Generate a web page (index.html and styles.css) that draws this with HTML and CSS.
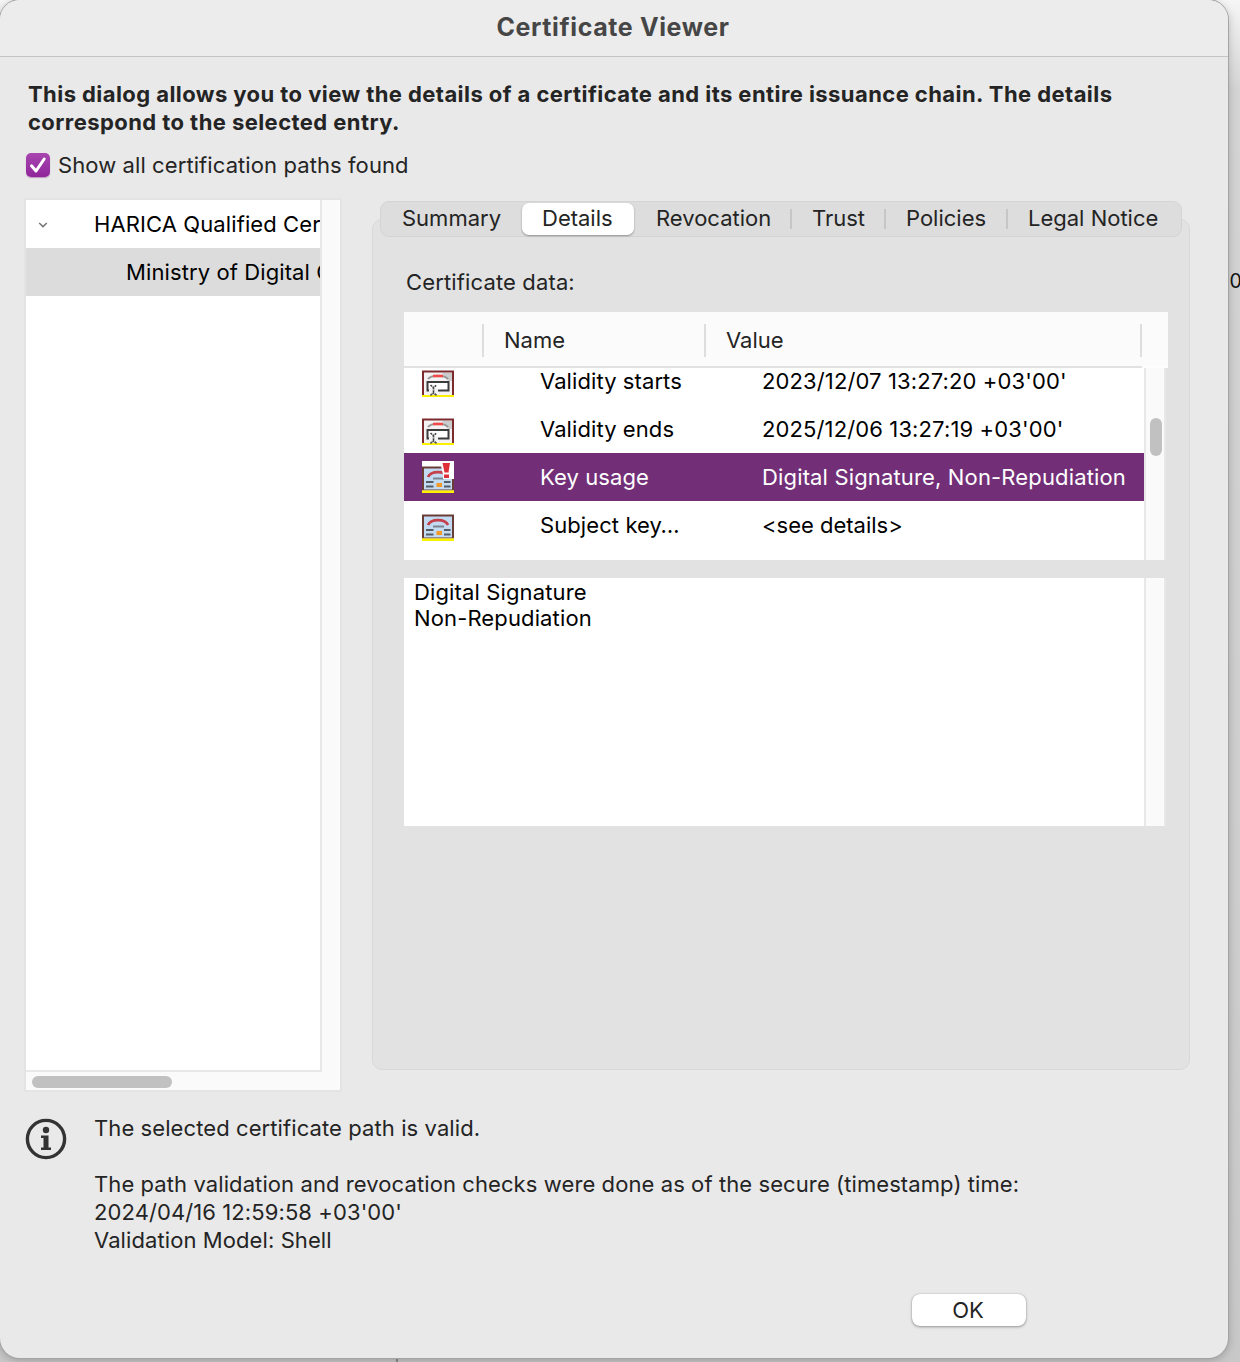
FILE: index.html
```html
<!DOCTYPE html>
<html lang="en">
<head>
<meta charset="utf-8">
<title>Certificate Viewer</title>
<link rel="stylesheet" href="styles.css">
</head>
<body>
<svg class="defs" width="0" height="0">
  <symbol id="cert-field" viewBox="0 0 32 32">
    <rect x="0" y="5.500" width="32" height="24.500" fill="#7c2c2e"/>
    <rect x="2" y="7.500" width="28" height="22.500" fill="#f4f2f3"/>
    <path d="M20 8 H30 V16 H26Z" fill="#ccc"/>
    <path d="M6 14 C9 9.500 23 9.500 26 14" fill="none" stroke="#999" stroke-width="2"/>
    <path d="M11 11 H21" stroke="#f04a4a" stroke-width="2.600"/>
    <rect x="5.500" y="17" width="21" height="8.500" fill="#fff" stroke="#3c3c3c" stroke-width="2"/>
    <path d="M7 23 H16 V30 H7Z" fill="#f4f2f3"/>
    <path d="M8.500 20 L11.500 22.500 L14.500 20 M11.500 22.500 V28 M8.500 30.500 L11.500 28 L14.500 30.500" fill="none" stroke="#444" stroke-width="1.600" stroke-dasharray="2 .7"/>
    <rect x="0" y="30" width="32" height="2" fill="#fbf000"/>
    <path d="M8.500 30.500 L10 29 M14.500 30.500 L13 29" stroke="#555" stroke-width="1.400"/>
  </symbol>
  <symbol id="cert" viewBox="0 0 32 32">
    <rect x="0" y="5.500" width="32" height="24" fill="#6a3c36"/>
    <rect x="2" y="7.500" width="28" height="21" fill="#c3dbf2"/>
    <path d="M6 16 C9 9.500 23 9.500 26 16" fill="none" stroke="#c4404a" stroke-width="2.800"/>
    <path d="M11 17.500 H22" stroke="#7b8490" stroke-width="2"/>
    <path d="M4 21 H11.500 M4 25.500 H11.500 M22 21 H28.500 M22 25.500 H28.500" stroke="#565c66" stroke-width="2"/>
    <rect x="14.500" y="22" width="5.500" height="4" fill="#f59a28"/>
    <rect x="0" y="29.500" width="32" height="2.500" fill="#fbf000"/>
  </symbol>
</svg>
<span class="behind-text">00</span>
<span class="behind-rule"></span>
<main class="window">
  <header class="titlebar">Certificate Viewer</header>
  <p class="intro">This dialog allows you to view the details of a certificate and its entire issuance chain. The details<br>correspond to the selected entry.</p>
  <label class="show-all">
    <span class="checkbox"><svg width="24" height="24" viewBox="0 0 24 24"><path d="M5.500 12.800 L10 18 L18.200 6" fill="none" stroke="#fff" stroke-width="3" stroke-linecap="round" stroke-linejoin="round"/></svg></span>
    <span>Show all certification paths found</span>
  </label>
  <div class="columns">
    <section class="tree">
      <div class="tree-list">
        <div class="tree-row"><svg class="chevron" width="10" height="6" viewBox="0 0 10 6"><path d="M1.200 1 L5 4.600 L8.800 1" fill="none" stroke="#777" stroke-width="1.500"/></svg><span>HARICA Qualified Cer</span></div>
        <div class="tree-row child selected"><span>Ministry of Digital G</span></div>
      </div>
      <div class="tree-vtrack"></div>
      <div class="tree-htrack"><span class="tree-thumb"></span></div>
    </section>
    <section class="pane">
      <nav class="tabs">
        <span class="tab summary">Summary</span>
        <span class="tab details active">Details</span>
        <span class="tab revocation divided">Revocation</span>
        <span class="tab trust divided">Trust</span>
        <span class="tab policies divided">Policies</span>
        <span class="tab legal">Legal Notice</span>
      </nav>
      <div class="pane-body">
        <div class="data-label">Certificate data:</div>
        <div class="table">
          <div class="thead"><span class="th th-icon"></span><span class="th th-name">Name</span><span class="th th-value">Value</span></div>
          <div class="tbody">
            <div class="rows">
              <div class="row first"><svg class="icon"><use href="#cert-field"/></svg><span class="name">Validity starts</span><span class="value">2023/12/07 13:27:20 +03'00'</span></div>
              <div class="row"><svg class="icon"><use href="#cert-field"/></svg><span class="name">Validity ends</span><span class="value">2025/12/06 13:27:19 +03'00'</span></div>
              <div class="row selected"><svg class="icon critical" viewBox="0 0 32 32"><use href="#cert"/><path d="M18 0 H32 V18 H21 V14Z" fill="#fff"/><path d="M20.500 2 H28 L26.500 11.500 H22.500Z M22 13.500 H27 V17 H22Z" fill="#dd3038"/></svg><span class="name">Key usage</span><span class="value usages">Digital Signature, Non-Repudiation</span></div>
              <div class="row"><svg class="icon"><use href="#cert"/></svg><span class="name">Subject key…</span><span class="value see">&lt;see details&gt;</span></div>
            </div>
            <div class="vtrack"><span class="vthumb"></span></div>
          </div>
        </div>
        <div class="detail">
          <div class="detail-text">Digital Signature<br>Non-Repudiation</div>
          <div class="vtrack"></div>
        </div>
      </div>
    </section>
  </div>
  <section class="status">
    <svg class="info" width="42" height="42" viewBox="0 0 42 42"><circle cx="21" cy="21" r="18.600" fill="none" stroke="#333" stroke-width="3.400"/><circle cx="21" cy="12" r="3.200" fill="#333"/><path d="M16 17.500 H23.500 V29.500 H26 V32 H16 V29.500 H18.500 V20 H16Z" fill="#333"/></svg>
    <p>The selected certificate path is valid.<br><br>The path validation and revocation checks were done as of the secure (timestamp) time:<br>2024/04/16 12:59:58 +03'00'<br>Validation Model: Shell</p>
  </section>
  <footer class="actions"><button class="ok">OK</button></footer>
</main>
</body>
</html>
```
FILE: styles.css
```css
* { box-sizing: border-box; }
body {
  margin: 0;
  width: 1240px;
  height: 1362px;
  overflow: hidden;
  position: relative;
  background: linear-gradient(#f6f6f6, #d4d4d4 90px, #cecece 900px, #c8c8c8);
  font: 22px/28px Inter, "Liberation Sans", sans-serif;
  letter-spacing: .09px;
  color: #242424;
}
p { margin: 0; }
span { white-space: nowrap; }
.defs { position: absolute; }
.behind-text { position: absolute; left: 1217px; top: 267px; font-size: 19.5px; color: #111; }
.behind-rule { position: absolute; left: 396px; top: 1356px; width: 2px; height: 6px; background: #8a8a8a; }
.window {
  position: relative;
  width: 1228px;
  height: 1358px;
  border-radius: 20px;
  background: #e9e9e9;
  box-shadow: 0 0 0 1px #a4a4a4, 0 2px 10px rgba(0, 0, 0, .25);
  overflow: hidden;
}
.titlebar {
  height: 57px;
  padding: 13px 2px 0 0;
  background: #ececec;
  border-bottom: 1px solid #c4c4c4;
  text-align: center;
  font-size: 25px;
  font-weight: 700;
  letter-spacing: .62px;
  color: #464646;
}
.intro { padding: 23px 28px 0; font-weight: 700; letter-spacing: .43px; white-space: nowrap; }
.show-all { display: flex; align-items: center; gap: 8px; height: 28px; margin: 15px 0 0 26px; }
.checkbox {
  width: 24px;
  height: 24px;
  border-radius: 5px;
  background: linear-gradient(#a846b0, #8f269b);
  box-shadow: 0 1px 1px rgba(120, 30, 130, .4);
}
.checkbox svg { display: block; }
.columns { display: flex; gap: 30px; margin: 19px 0 0 24px; }
.tree {
  width: 318px;
  height: 894px;
  border: 2px solid #e4e4e4;
  display: grid;
  grid-template: 870px 20px / 294px 20px;
  background: #fafafa;
}
.tree-list { background: #fff; overflow: hidden; color: #000; letter-spacing: .1px; }
.tree-row { display: flex; align-items: center; height: 48px; padding-left: 12px; }
.chevron { margin: 2px 46px 0 0; flex: none; }
.tree-row.child { padding-left: 100px; }
.tree-row.selected { background: #dcdcdc; }
.tree-vtrack { border-left: 2px solid #e8e8e8; }
.tree-htrack { width: 296px; border-top: 2px solid #e8e8e8; padding: 4px 6px; }
.tree-thumb { display: block; width: 140px; height: 12px; border-radius: 6px; background: #c1c1c1; }
.pane { width: 818px; padding-top: 3px; }
.tabs {
  position: relative;
  display: flex;
  width: 802px;
  height: 36px;
  margin-left: 8px;
  padding: 1px;
  border-radius: 9px;
  border: 1px solid #d4d4d4;
  background: #dddddd;
  letter-spacing: 0;
}
.tab { height: 32px; display: flex; align-items: center; padding: 0 0 2px 20px; }
.summary { width: 140px; }
.details { width: 112px; }
.active { background: #fff; border-radius: 7px; box-shadow: 0 1px 2px rgba(0, 0, 0, .35); }
.revocation { width: 158px; padding-left: 22px; }
.trust { width: 94px; }
.policies { width: 122px; }
.legal { padding-left: 20px; }
.divided { background: linear-gradient(#c6c6c6, #c6c6c6) right 6px / 2px 20px no-repeat; }
.pane-body {
  height: 851px;
  margin-top: -18px;
  padding: 48px 0 0 31px;
  border: 1px solid #d8d8d8;
  border-radius: 10px;
  background: #e2e2e2;
}
.data-label { padding-left: 2px; letter-spacing: .14px; }
.table { margin-top: 16px; width: 764px; }
.thead { display: flex; height: 56px; padding-top: 12px; background: linear-gradient(90deg, #e2e2e2 738px, #fdfdfd 738px) bottom / 100% 2px no-repeat, #fbfbfb; }
.th { height: 33px; display: flex; align-items: center; border-right: 2px solid #dedede; padding: 0 0 2px 20px; letter-spacing: 0; }
.th-icon { width: 80px; }
.th-name { width: 222px; }
.th-value { width: 436px; }
.tbody { display: flex; height: 192px; overflow: hidden; }
.rows { width: 740px; background: #fff; color: #000; }
.row { display: flex; align-items: center; height: 48px; padding-left: 18px; }
.row.first { margin-top: -11px; }
.row.selected { background: #722f78; color: #fff; }
.icon { width: 32px; height: 32px; margin-right: 86px; flex: none; }
.icon.critical { background: #fff; }
.name { width: 222px; }
.value { letter-spacing: .12px; }
.value.usages { letter-spacing: .15px; }
.value.see { letter-spacing: 0; }
.vtrack { width: 22px; background: #fafafa; border: solid #e8e8e8; border-width: 0 2px; }
.vthumb { display: block; width: 12px; height: 38px; margin: 50px 0 0 4px; border-radius: 6px; background: #c1c1c1; }
.detail { display: flex; margin-top: 18px; height: 248px; }
.detail-text { width: 740px; padding: 1px 10px; background: #fff; line-height: 26px; letter-spacing: .13px; color: #000; }
.status { display: flex; gap: 27px; margin: 22px 0 0 25px; }
.info { margin-top: 4px; }
.actions { margin: 40px 0 0 912px; }
.ok {
  width: 114px;
  height: 32px;
  padding: 0 2px 0 0;
  border: 0;
  border-radius: 8px;
  background: #fff;
  box-shadow: 0 0 1px rgba(0, 0, 0, .3), 0 1px 3px rgba(0, 0, 0, .35);
  font: inherit;
  color: inherit;
}
```
